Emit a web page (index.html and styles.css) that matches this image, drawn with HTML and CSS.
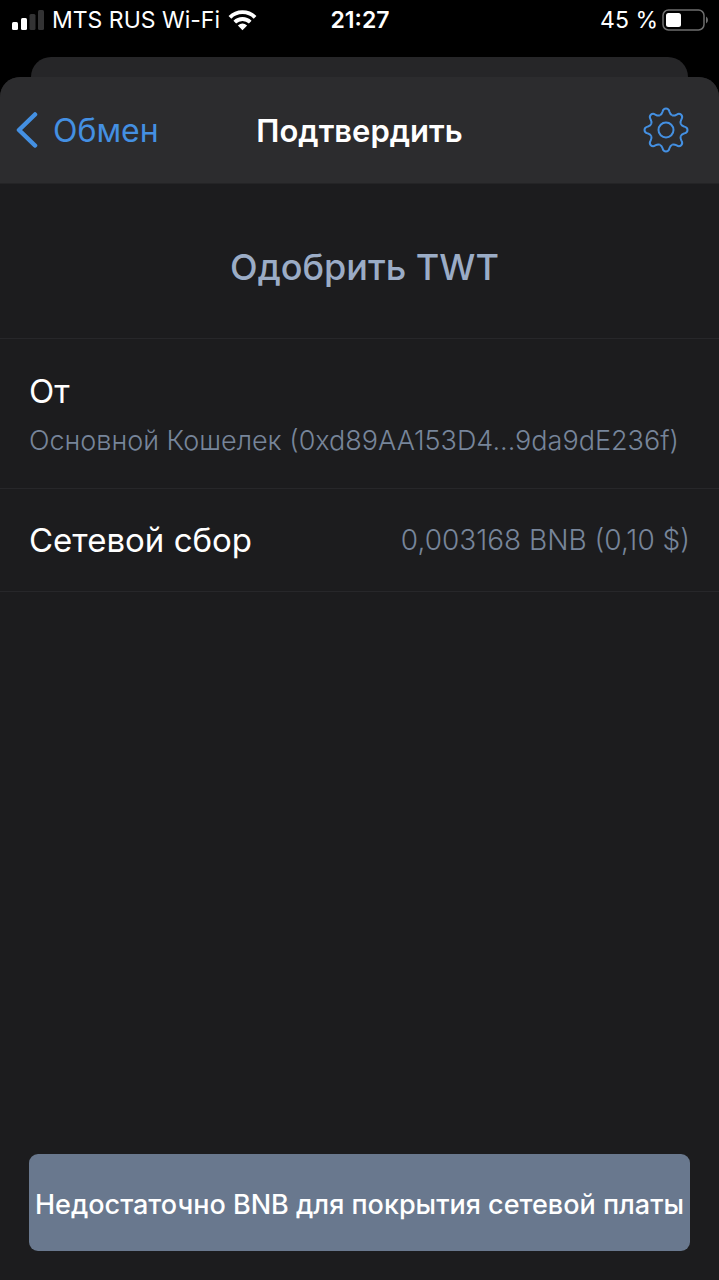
FILE: index.html
```
<!DOCTYPE html>
<html lang="ru">
    <head>
        <meta charset="utf-8">
        <meta name="viewport" content="width=device-width, initial-scale=1.0">
        <title>Подтвердить</title>
        <link rel="stylesheet" href="styles.css">
    </head>
    <body>
        <div class="status">
            <div class="status-left">
                <svg width="32" height="20" viewBox="0 0 32 20" aria-hidden="true">
                    <rect x="0" y="12" width="6" height="8" rx="1.5" fill="#fff"/>
                    <rect x="9" y="8" width="6" height="12" rx="1.5" fill="#fff"/>
                    <rect x="17.500" y="4" width="6" height="16" rx="1.5" fill="#333334"/>
                    <rect x="26" y="0" width="6" height="20" rx="1.5" fill="#333334"/>
                </svg>
                <span>MTS RUS Wi-Fi</span>
                <svg width="29" height="22" viewBox="0 0 30 22" fill="none" stroke="#fff" stroke-width="4" aria-hidden="true">
                    <path d="M2 8.300C9.200 1.100 20.800 1.100 28 8.300"/>
                    <path d="M7 13.200C11.500 8.900 18.500 8.900 23 13.200"/>
                    <path d="M10.200 16.800Q15 12.600 19.800 16.800L15 21.500Z" fill="#fff" stroke="none"/>
                </svg>
            </div>
            <div class="time">21:27</div>
            <div class="status-right">
                <span>45 %</span>
                <svg width="46" height="22" viewBox="0 0 46 22" aria-hidden="true">
                    <rect x="1" y="1" width="41" height="20" rx="5.500" fill="none" stroke="#6e6e6e" stroke-width="1.5"/>
                    <rect x="4" y="4" width="15" height="14" rx="2.500" fill="#fff"/>
                    <path d="M44 7.500Q46 8.500 46 11T44 14.500Z" fill="#6e6e6e"/>
                </svg>
            </div>
        </div>
        <div class="card-behind"></div>
        <div class="sheet">
            <header class="navbar">
                <a class="back" href="#">
                    <svg width="22" height="36" viewBox="0 0 22 36" fill="none" stroke="#4490e2" stroke-width="4.500" stroke-linecap="round" stroke-linejoin="round" aria-hidden="true">
                        <path d="M19 2.500L3 18L19 33.500"/>
                    </svg>
                    Обмен
                </a>
                <h1>Подтвердить</h1>
                <button class="settings" type="button" aria-label="Настройки">
                    <svg width="46" height="46" viewBox="-23 -23 46 46" fill="none" stroke="#4490e2" stroke-width="2" aria-hidden="true">
                        <defs>
                            <path id="tooth" d="M-6.100-14.800C-4-15.700-3.900-16.800-3.400-18.500C-2.900-20.400-1.900-21.500 0-21.500C1.900-21.500 2.900-20.400 3.400-18.500C3.900-16.800 4-15.700 6.100-14.800"/>
                        </defs>
                        <use href="#tooth"/>
                        <use href="#tooth" transform="rotate(45)"/>
                        <use href="#tooth" transform="rotate(90)"/>
                        <use href="#tooth" transform="rotate(135)"/>
                        <use href="#tooth" transform="rotate(180)"/>
                        <use href="#tooth" transform="rotate(225)"/>
                        <use href="#tooth" transform="rotate(270)"/>
                        <use href="#tooth" transform="rotate(315)"/>
                        <circle r="7.500"/>
                    </svg>
                </button>
            </header>
            <main>
                <h2 class="action">Одобрить TWT</h2>
                <dl class="details">
                    <div class="row">
                        <dt>От</dt>
                        <dd>Основной Кошелек (0xd89AA153D4...9da9dE236f)</dd>
                    </div>
                    <div class="row row-fee">
                        <dt>Сетевой сбор</dt>
                        <dd>0,003168 BNB (0,10 $)</dd>
                    </div>
                </dl>
            </main>
            <footer>
                <button class="submit" type="button">Недостаточно BNB для покрытия сетевой платы</button>
            </footer>
        </div>
    </body>
</html>
```
FILE: styles.css
```
* {
    box-sizing: border-box;
}

body {
    margin: 0;
    min-height: 100vh;
    display: flex;
    flex-direction: column;
    background-color: #000;
    color: #fff;
    font-family: Inter, "Liberation Sans", sans-serif;
}

svg {
    display: block;
    flex: none;
}

/* status bar */
.status {
    display: grid;
    grid-template-columns: 1fr auto 1fr;
    align-items: center;
    height: 57px;
    padding: 0 11px 18px 12px;
    font-size: 23px;
    line-height: 28px;
    white-space: nowrap;
}

.status-left,
.status-right {
    display: flex;
    align-items: center;
    gap: 8px;
}

.status-right {
    justify-content: flex-end;
    gap: 4px;
}

.time {
    font-weight: 600;
}

/* edge of the screen under the sheet */
.card-behind {
    height: 20px;
    margin: 0 31px;
    border-radius: 20px 20px 0 0;
    background-color: #262628;
}

.sheet {
    flex: 1;
    display: flex;
    flex-direction: column;
    border-radius: 20px 20px 0 0;
    background-color: #1c1c1e;
    overflow: hidden;
}

.navbar {
    display: grid;
    grid-template-columns: 1fr auto 1fr;
    align-items: center;
    height: 107px;
    padding: 0 16px;
    background-color: #2c2c2e;
    border-bottom: 1px solid #242426;
}

.back {
    display: flex;
    align-items: center;
    gap: 15px;
    color: #4490e2;
    font-size: 32px;
    text-decoration: none;
}

h1 {
    margin: 0;
    font-size: 31px;
    font-weight: 600;
}

.settings {
    justify-self: end;
    padding: 0 14px;
    border: 0;
    background: none;
}

main {
    flex: 1;
}

.action {
    margin: 0;
    padding: 59px 20px 47px 30px;
    color: #9bacc6;
    font-size: 36px;
    line-height: 48px;
    font-weight: 500;
    text-align: center;
}

.details {
    margin: 0;
    border-top: 1px solid #27272a;
}

.row {
    padding: 29px 29px 26px;
    border-bottom: 1px solid #27272a;
}

.row dt {
    font-size: 33px;
    line-height: 46px;
}

.row dd {
    margin: 0;
    padding-top: 6px;
    color: #77859a;
    font-size: 27px;
    line-height: 42px;
    font-weight: 300;
    white-space: nowrap;
}

.row-fee {
    display: flex;
    justify-content: space-between;
    align-items: center;
    padding: 28px 29px;
}

.row-fee dd {
    padding-top: 0;
    font-size: 28px;
}

footer {
    padding: 29px;
}

.submit {
    display: flex;
    justify-content: center;
    align-items: center;
    width: 100%;
    height: 97px;
    padding: 4px 0 0;
    border: 0;
    border-radius: 9px;
    background-color: #69788e;
    color: #fff;
    font-family: inherit;
    font-size: 27px;
    font-weight: 500;
    white-space: nowrap;
}
```
